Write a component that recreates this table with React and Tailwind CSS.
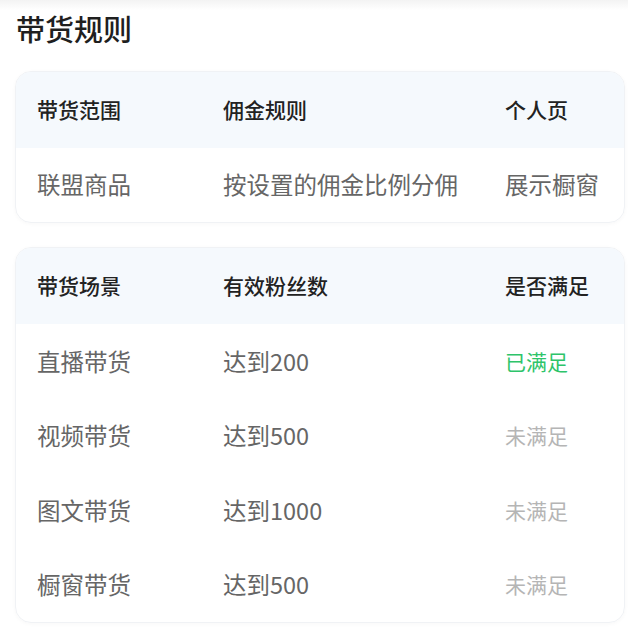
const scopeRows = [{ range: '联盟商品', rule: '按设置的佣金比例分佣', page: '展示橱窗' }]

const sceneRows = [
  { scene: '直播带货', fans: '达到200', ok: true },
  { scene: '视频带货', fans: '达到500', ok: false },
  { scene: '图文带货', fans: '达到1000', ok: false },
  { scene: '橱窗带货', fans: '达到500', ok: false },
]

function HeadRow({ cols }) {
  return (
    <div className="flex h-[76px] items-center bg-[#f5f9fd] text-[21px] font-medium text-[#222]">
      <div className="w-[207px] pl-[21px]">{cols[0]}</div>
      <div className="w-[282px]">{cols[1]}</div>
      <div className="flex-1">{cols[2]}</div>
    </div>
  )
}

export default function App() {
  return (
    <div
      className="min-h-screen w-[628px] bg-white"
      style={{ fontFamily: '"Noto Sans CJK SC", "Noto Sans", sans-serif' }}
    >
      <div className="h-[10px] bg-gradient-to-b from-[#f3f3f3] to-white"></div>
      <div className="pl-[16px] pt-[1px]">
        <h1 className="text-[29px] font-medium leading-[34px] text-[#1f1f1f]">带货规则</h1>
      </div>

      <div className="ml-[15px] mr-[3px] mt-[26px] overflow-hidden rounded-[16px] border border-[#f0f2f5] shadow-[0_1px_4px_rgba(0,0,0,0.03)]">
        <HeadRow cols={['带货范围', '佣金规则', '个人页']} />
        {scopeRows.map((r) => (
          <div key={r.range} className="flex h-[74px] items-center text-[23.5px] text-[#666]">
            <div className="w-[207px] pl-[21px]">{r.range}</div>
            <div className="w-[282px]">{r.rule}</div>
            <div className="flex-1">{r.page}</div>
          </div>
        ))}
      </div>

      <div className="ml-[15px] mr-[3px] mt-[24px] overflow-hidden rounded-[16px] border border-[#f0f2f5] shadow-[0_1px_4px_rgba(0,0,0,0.03)]">
        <HeadRow cols={['带货场景', '有效粉丝数', '是否满足']} />
        {sceneRows.map((r) => (
          <div key={r.scene} className="flex h-[74.5px] items-center text-[23.5px] text-[#666]">
            <div className="w-[207px] pl-[21px]">{r.scene}</div>
            <div className="w-[282px]">{r.fans}</div>
            <div className={r.ok ? 'flex-1 text-[21px] text-[#2ec46a]' : 'flex-1 text-[21px] text-[#b5b5b5]'}>
              {r.ok ? '已满足' : '未满足'}
            </div>
          </div>
        ))}
      </div>
    </div>
  )
}
